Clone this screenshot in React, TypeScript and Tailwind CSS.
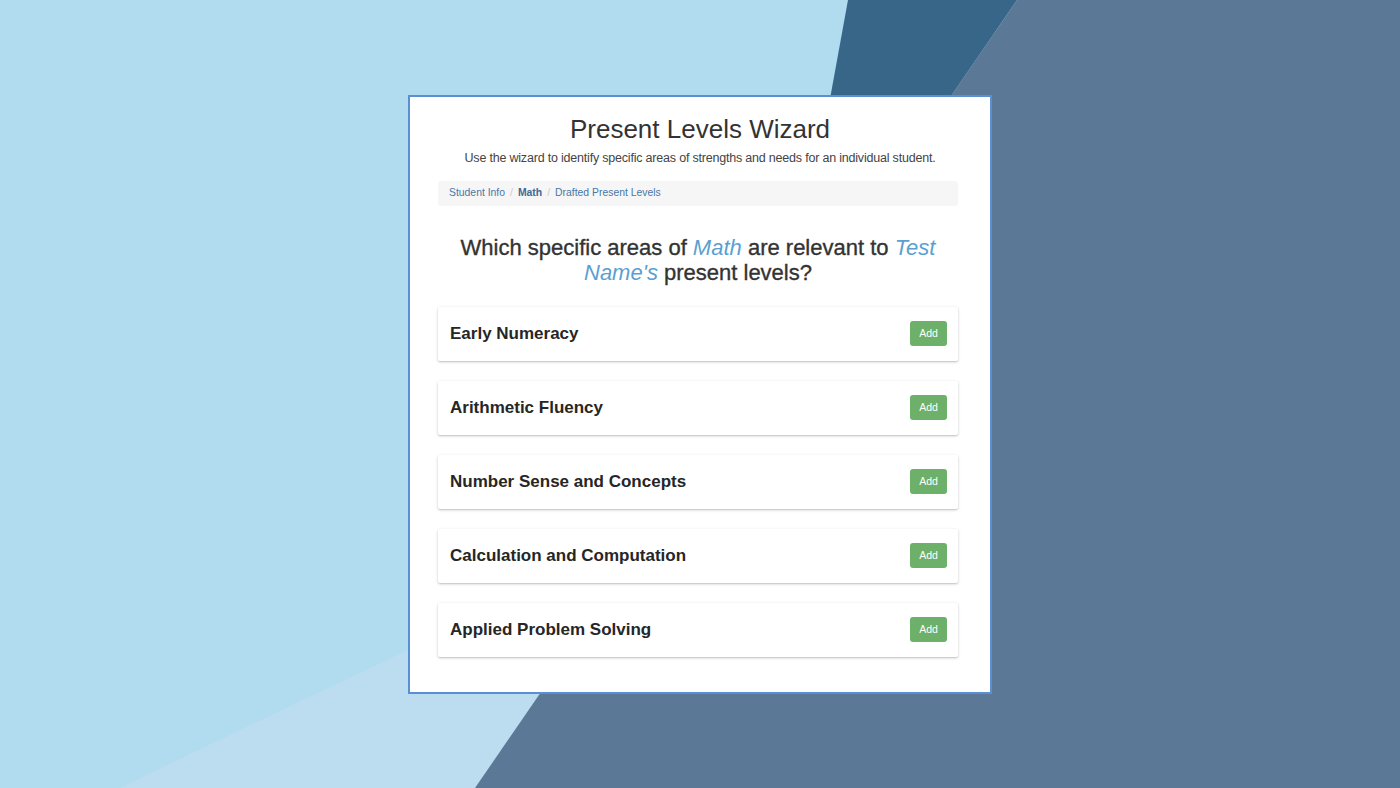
import React from 'react';

const areas = [
  'Early Numeracy',
  'Arithmetic Fluency',
  'Number Sense and Concepts',
  'Calculation and Computation',
  'Applied Problem Solving',
];

function Backdrop() {
  return (
    <svg className="absolute inset-0 h-full w-full" viewBox="0 0 1400 788" preserveAspectRatio="none">
      <rect x="0" y="0" width="1400" height="788" fill="#b1dbef" />
      <path d="M0 788 L120 788 Q280 710 640 540 L640 788 Z" fill="#bcdcef" />
      <polygon points="848,0 1017,0 787,335" fill="#386689" />
      <polygon points="1017,0 1400,0 1400,788 475,788" fill="#5b7897" />
    </svg>
  );
}

export default function App() {
  return (
    <div className="relative flex h-[788px] w-full items-center justify-center overflow-hidden font-['Liberation_Sans',Arial,sans-serif]">
      <Backdrop />

      {/* wizard card */}
      <div className="relative flex h-[599px] w-[584px] flex-col items-center border-2 border-[#5b8fd4] bg-white pt-[17px]">
        <h1 className="text-[26px] leading-[30px] text-[#333]">Present Levels Wizard</h1>
        <p className="mt-[4px] text-[12.5px] leading-[20px] tracking-[-0.2px] text-[#444]">
          Use the wizard to identify specific areas of strengths and needs for an individual student.
        </p>

        <nav className="mr-[4px] mt-[13px] flex h-[25px] w-[520px] items-center gap-[5px] rounded-[3px] bg-[#f6f6f6] px-[11px] text-[10.4px] text-[#4a76a8]">
          <span>Student Info</span>
          <span className="text-[#ccc]">/</span>
          <span className="font-bold text-[#3c6a9c]">Math</span>
          <span className="text-[#ccc]">/</span>
          <span>Drafted Present Levels</span>
        </nav>

        <h2 className="mr-[4px] mt-[29px] w-[500px] text-center text-[22px] leading-[25px] text-[#333] [-webkit-text-stroke:0.35px_#333]">
          Which specific areas of <em className="text-[#5b9fd2] [-webkit-text-stroke:0]">Math</em> are relevant to{' '}
          <em className="text-[#5b9fd2] [-webkit-text-stroke:0]">Test Name's</em> present levels?
        </h2>

        <div className="mr-[4px] mt-[22px] flex w-[520px] flex-col gap-[20px]">
          {areas.map((a) => (
            <div
              key={a}
              className="flex h-[54px] items-center justify-between rounded-[2px] bg-white pl-[12px] pr-[11px] shadow-[0_1px_3px_rgba(0,0,0,0.22),0_1px_1px_rgba(0,0,0,0.06)]"
            >
              <span className="text-[17px] font-bold text-[#262626]">{a}</span>
              <button className="flex h-[25px] w-[37px] items-center justify-center rounded-[3px] bg-[#6cb06a] text-[10.5px] text-white">
                Add
              </button>
            </div>
          ))}
        </div>
      </div>
    </div>
  );
}
